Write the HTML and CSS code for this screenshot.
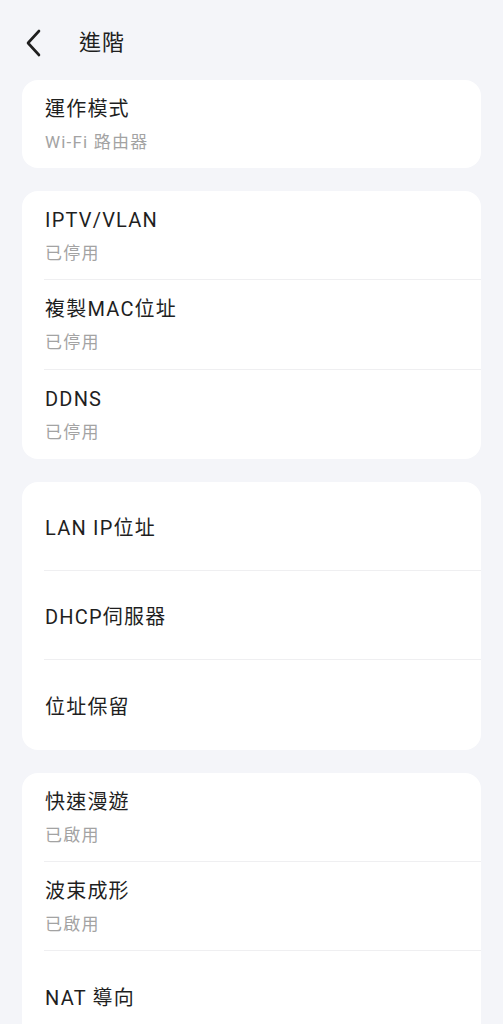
FILE: index.html
```html
<!DOCTYPE html>
<html lang="zh-Hant">
<head>
<meta charset="utf-8">
<title>進階</title>
<link rel="stylesheet" href="styles.css">
</head>
<body>
<header class="topbar">
  <svg class="back" width="18" height="28" viewBox="0 0 18 28" aria-hidden="true">
    <path d="M14 2 L3 14 L14 26" fill="none" stroke="#1f1f1f" stroke-width="2.6" stroke-linecap="round" stroke-linejoin="round"/>
  </svg>
  <h1 class="title">進階</h1>
</header>
<main class="content">
  <section class="card">
    <div class="row two"><div class="label">運作模式</div><div class="sub">Wi-Fi 路由器</div></div>
  </section>
  <section class="card">
    <div class="row two"><div class="label">IPTV/VLAN</div><div class="sub">已停用</div></div>
    <div class="row two"><div class="label">複製MAC位址</div><div class="sub">已停用</div></div>
    <div class="row two"><div class="label">DDNS</div><div class="sub">已停用</div></div>
  </section>
  <section class="card">
    <div class="row one"><div class="label">LAN IP位址</div></div>
    <div class="row one"><div class="label">DHCP伺服器</div></div>
    <div class="row one"><div class="label">位址保留</div></div>
  </section>
  <section class="card">
    <div class="row two"><div class="label">快速漫遊</div><div class="sub">已啟用</div></div>
    <div class="row two"><div class="label">波束成形</div><div class="sub">已啟用</div></div>
    <div class="row one"><div class="label">NAT 導向</div></div>
  </section>
</main>
</body>
</html>
```

FILE: styles.css
```css
html, body {
  margin: 0;
  padding: 0;
}
body {
  background: #f4f5f9;
  font-family: Roboto, "Noto Sans CJK TC", sans-serif;
  color: #1f1f1f;
  width: 503px;
  overflow: hidden;
}
.topbar {
  height: 80px;
  display: flex;
  align-items: center;
  padding-left: 25px;
  padding-top: 5px;
  box-sizing: border-box;
}
.back {
  display: block;
  flex: none;
}
.title {
  margin: 0 0 0 36px;
  font-size: 22px;
  letter-spacing: 1px;
  font-weight: 400;
  line-height: 30px;
  color: #1f1f1f;
}
.content {
  display: flex;
  flex-direction: column;
  gap: 23px;
  padding: 0 22px;
}
.card {
  background: #ffffff;
  border-radius: 16px;
  padding-left: 22px;
}
.row {
  box-sizing: border-box;
  height: 89.3px;
  border-bottom: 1px solid #efeff1;
  display: flex;
  flex-direction: column;
  padding-left: 1px;
}
.row:last-child {
  border-bottom: none;
}
.card:first-child .row {
  height: 88px;
}
.row.two {
  padding-top: 15px;
}
.row.one {
  justify-content: center;
  padding-top: 3px;
}
.label {
  font-size: 20px;
  letter-spacing: 1.2px;
  line-height: 28px;
  color: #1f1f1f;
}
.sub {
  margin-top: 7px;
  font-size: 17px;
  letter-spacing: 1.2px;
  line-height: 25px;
  color: #a3a3a3;
}
```
